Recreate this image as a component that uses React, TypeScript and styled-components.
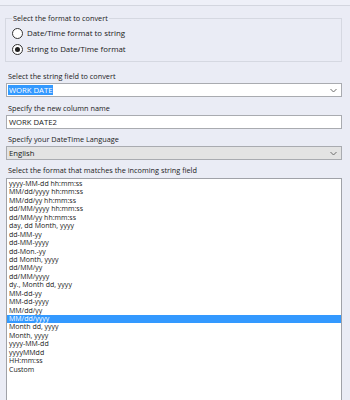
import React from 'react';
import styled, { createGlobalStyle } from 'styled-components';

const GlobalStyle = createGlobalStyle`
  body {
    margin: 0;
    background: #eaecf5;
    font-family: 'Open Sans', 'Noto Sans', sans-serif;
    color: #1a1a1a;
    overflow: hidden;
  }
`;

const Page = styled.div`
  width: 350px;
  height: 400px;
  overflow: hidden;
`;

const TopStrip = styled.div`
  height: 5px;
  background: #eef0f8;
  border-bottom: 1px solid #d3d6df;
`;

const Content = styled.div`
  padding: 0 8px 0 6px;
  display: flex;
  flex-direction: column;
`;

const GroupBox = styled.fieldset`
  margin: 6px 0 0 -1px;
  padding: 4px 0 0 6px;
  height: 50px;
  box-sizing: border-box;
  border: 1px solid #d5d8e1;
  display: flex;
  flex-direction: column;
  gap: 5px;
`;

const Legend = styled.legend`
  font-size: 7.3px;
  padding: 0 1px;
  margin-left: 0;
  line-height: 12px;
`;

const RadioRow = styled.label`
  display: flex;
  align-items: center;
  gap: 4px;
  font-size: 7.9px;
  line-height: 11px;
`;

const RadioCircle = styled.span<{ $checked?: boolean }>`
  width: 11px;
  height: 11px;
  box-sizing: border-box;
  border-radius: 50%;
  border: 1px solid #333;
  background: #fff;
  display: flex;
  align-items: center;
  justify-content: center;

  &::after {
    content: '';
    width: 5px;
    height: 5px;
    border-radius: 50%;
    background: ${(p) => (p.$checked ? '#1e1e1e' : 'transparent')};
  }
`;

const FieldLabel = styled.div<{ $top: number }>`
  font-size: 7.3px;
  line-height: 12px;
  margin-top: ${(p) => p.$top}px;
  margin-bottom: 1px;
  padding-left: 2px;
`;

const Box = styled.div<{ $disabled?: boolean }>`
  height: 14px;
  box-sizing: border-box;
  border: 1px solid #a9abb0;
  background: ${(p) => (p.$disabled ? '#e3e3e3' : '#fff')};
  display: flex;
  align-items: center;
  justify-content: space-between;
  padding: 0 4px 0 1px;
  font-size: 7.7px;
`;

const Selected = styled.span`
  background: #3399ff;
  color: #fff;
  padding: 0 1px;
  line-height: 10px;
`;

const Plain = styled.span`
  padding: 0 1px;
  line-height: 10px;
`;

const Chevron = () => (
  <svg width="7" height="5" viewBox="0 0 7 5">
    <path d="M0.5 1 L3.5 4 L6.5 1" fill="none" stroke="#6d6d6d" strokeWidth="1" />
  </svg>
);

const ListBox = styled.div`
  margin-top: 1px;
  height: 230px;
  box-sizing: border-box;
  border: 1px solid #a0a2a8;
  background: #fff;
  padding-top: 1px;
`;

const Item = styled.div<{ $active?: boolean }>`
  height: 8.45px;
  line-height: 8.45px;
  font-size: 7px;
  padding-left: 2px;
  white-space: nowrap;
  background: ${(p) => (p.$active ? '#3399ff' : 'transparent')};
  color: ${(p) => (p.$active ? '#fff' : '#1a1a1a')};
`;

const formats = [
  'yyyy-MM-dd hh:mm:ss',
  'MM/dd/yyyy hh:mm:ss',
  'MM/dd/yy hh:mm:ss',
  'dd/MM/yyyy hh:mm:ss',
  'dd/MM/yy hh:mm:ss',
  'day, dd Month, yyyy',
  'dd-MM-yy',
  'dd-MM-yyyy',
  'dd-Mon.-yy',
  'dd Month, yyyy',
  'dd/MM/yy',
  'dd/MM/yyyy',
  'dy., Month dd, yyyy',
  'MM-dd-yy',
  'MM-dd-yyyy',
  'MM/dd/yy',
  'MM/dd/yyyy',
  'Month dd, yyyy',
  'Month, yyyy',
  'yyyy-MM-dd',
  'yyyyMMdd',
  'HH:mm:ss',
  'Custom',
];

const App = () => {
  return (
    <Page>
      <GlobalStyle />
      <TopStrip />
      <Content>
        <GroupBox>
          <Legend>Select the format to convert</Legend>
          <RadioRow>
            <RadioCircle />
            Date/Time format to string
          </RadioRow>
          <RadioRow>
            <RadioCircle $checked />
            String to Date/Time format
          </RadioRow>
        </GroupBox>

        <FieldLabel $top={8}>Select the string field to convert</FieldLabel>
        <Box>
          <Selected>WORK DATE</Selected>
          <Chevron />
        </Box>

        <FieldLabel $top={5}>Specify the new column name</FieldLabel>
        <Box>
          <Plain>WORK DATE2</Plain>
        </Box>

        <FieldLabel $top={4}>Specify your DateTime Language</FieldLabel>
        <Box $disabled>
          <Plain>English</Plain>
          <Chevron />
        </Box>

        <FieldLabel $top={4}>Select the format that matches the incoming string field</FieldLabel>
        <ListBox>
          {formats.map((f) => (
            <Item key={f} $active={f === 'MM/dd/yyyy'}>
              {f}
            </Item>
          ))}
        </ListBox>
      </Content>
    </Page>
  );
};

export default App;
